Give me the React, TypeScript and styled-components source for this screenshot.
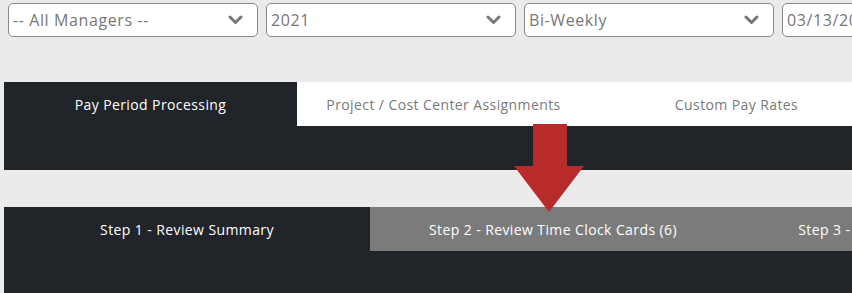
import React from 'react';
import styled, { createGlobalStyle } from 'styled-components';

const GlobalStyle = createGlobalStyle`
  html, body {
    margin: 0;
    padding: 0;
    background: #ebebeb;
    overflow: hidden;
    font-family: "Open Sans", "Liberation Sans", sans-serif;
  }
`;

type TabProps = {
  $active?: boolean
}

const filters = ['-- All Managers --', '2021', 'Bi-Weekly'];

const tabs = ['Pay Period Processing', 'Project / Cost Center Assignments', 'Custom Pay Rates'];

const steps = ['Step 1 - Review Summary', 'Step 2 - Review Time Clock Cards (6)', 'Step 3 - Approve and Close Periods'];

const Chevron = () => (
  <svg width="15" height="10" viewBox="0 0 15 10">
    <path d="M2 2 L7.5 7.5 L13 2" fill="none" stroke="#777" strokeWidth="3" strokeLinecap="round" strokeLinejoin="round" />
  </svg>
);

const App: React.FC = () => {
  return (
    <>
      <GlobalStyle />
      <Page>
        <FilterRow>
          {filters.map((f) => (
            <SelectBox key={f}>
              <SelectText>{f}</SelectText>
              <Chevron />
            </SelectBox>
          ))}
          <DateBox>03/13/2021</DateBox>
        </FilterRow>

        <Section>
          <TabBar>
            {tabs.map((t, i) => (
              <Tab key={t} $active={i === 0}>{t}</Tab>
            ))}
          </TabBar>
          <DarkPanel $h={44} />
        </Section>

        <Arrow>
          <svg width="70" height="88" viewBox="0 0 70 88">
            <polygon points="19,0 53,0 53,42 70,42 35,88 0,42 19,42" fill="#b92b2b" />
          </svg>
        </Arrow>

        <Section $top={37}>
          <TabBar>
            {steps.map((s, i) => (
              <Step key={s} $active={i === 0}>{s}</Step>
            ))}
          </TabBar>
          <DarkPanel $h={42} />
        </Section>
      </Page>
    </>
  );
}

export default App;

const Page = styled.div`
  position: relative;
  width: 852px;
  height: 293px;
  overflow: hidden;
`

const FilterRow = styled.div`
  display: flex;
  gap: 8px;
  padding: 3px 0 0 8px;
  height: 34px;
`

const SelectBox = styled.div`
  flex: 0 0 250px;
  box-sizing: border-box;
  height: 34px;
  border: 1px solid #8a8a8a;
  border-radius: 5px;
  background: #fff;
  display: flex;
  align-items: center;
  justify-content: space-between;
  padding: 0 14px 0 4px;
`

const SelectText = styled.span`
  font-size: 16px;
  letter-spacing: 0.6px;
  color: #777;
`

const DateBox = styled(SelectBox)`
  flex: 0 0 250px;
  font-size: 16px;
  letter-spacing: 0.6px;
  color: #777;
  justify-content: flex-start;
`

const Section = styled.div<{ $top?: number }>`
  margin: ${({ $top }) => $top ?? 45}px 0 0 4px;
  width: 1100px;
`

const TabBar = styled.div`
  display: flex;
`

const Tab = styled.div<TabProps>`
  flex: 0 0 293px;
  height: 44px;
  display: flex;
  align-items: center;
  justify-content: center;
  font-size: 14px;
  letter-spacing: 0.4px;
  font-weight: ${({ $active }) => $active ? 500 : 400};
  background: ${({ $active }) => $active ? '#212429' : '#fff'};
  color: ${({ $active }) => $active ? '#fff' : '#7a7a7a'};
`

const Step = styled.div<TabProps>`
  flex: 0 0 366px;
  height: 44px;
  display: flex;
  align-items: center;
  justify-content: center;
  font-size: 14px;
  letter-spacing: 0.4px;
  font-weight: 500;
  color: #fff;
  background: ${({ $active }) => $active ? '#212429' : '#7b7b7b'};
`

const DarkPanel = styled.div<{ $h: number }>`
  height: ${({ $h }) => $h}px;
  background: #212429;
`

const Arrow = styled.div`
  position: absolute;
  left: 514px;
  top: 124px;
  line-height: 0;
`
